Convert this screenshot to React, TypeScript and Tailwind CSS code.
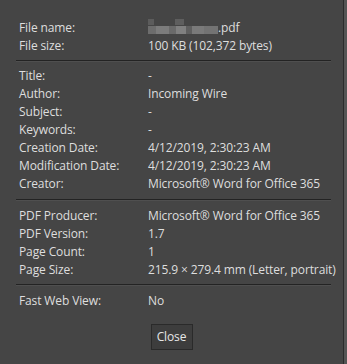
import React from "react";

type Row = [string, React.ReactNode];

const groups: Row[][] = [
  [
    ["File name:", null],
    ["File size:", "100 KB (102,372 bytes)"],
  ],
  [
    ["Title:", "-"],
    ["Author:", "Incoming Wire"],
    ["Subject:", "-"],
    ["Keywords:", "-"],
    ["Creation Date:", "4/12/2019, 2:30:23 AM"],
    ["Modification Date:", "4/12/2019, 2:30:23 AM"],
    ["Creator:", "Microsoft® Word for Office 365"],
  ],
  [
    ["PDF Producer:", "Microsoft® Word for Office 365"],
    ["PDF Version:", "1.7"],
    ["Page Count:", "1"],
    ["Page Size:", "215.9 × 279.4 mm (Letter, portrait)"],
  ],
  [["Fast Web View:", "No"]],
];

const sepPad = ["", "py-[5px]", "py-[6px]", "pt-[5px] pb-[6px]"];

function BlurredName() {
  // pixelated / blurred file name
  return (
    <span className="flex items-center">
      <span className="relative flex h-[12px] items-end">
        <span className="absolute left-[0px] top-[-3px] h-[6px] w-[6px] bg-[#5c5c5c]" />
        <span className="absolute left-[27px] top-[-3px] h-[6px] w-[9px] bg-[#5e5e5e]" />
        <span className="h-[8px] w-[8px] bg-[#6d6d6d]" />
        <span className="h-[8px] w-[13px] bg-[#7c7c7c]" />
        <span className="h-[8px] w-[7px] bg-[#6a6a6a]" />
        <span className="h-[8px] w-[10px] bg-[#808080]" />
        <span className="h-[8px] w-[6px] bg-[#5f5f5f]" />
        <span className="h-[8px] w-[12px] bg-[#7a7a7a]" />
        <span className="h-[8px] w-[14px] bg-[#737373]" />
      </span>
      <span>.pdf</span>
    </span>
  );
}

function Separator() {
  return (
    <div className="ml-[16px] mr-[12px] flex flex-col">
      <div className="h-px bg-[#232323]" />
      <div className="h-px bg-[#4f4f4f]" />
    </div>
  );
}

export default function App() {
  return (
    <div className="flex h-[364px] w-[347px] bg-[#454545]">
      <div
        className="flex w-[343px] flex-col pt-[19px] text-[12px] tracking-[-0.12px] text-[#dedede]"
        style={{ fontFamily: '"Open Sans", "Noto Sans", sans-serif' }}
      >
        {groups.map((group, gi) => (
          <React.Fragment key={gi}>
            {gi > 0 && (
              <div className={sepPad[gi]}>
                <Separator />
              </div>
            )}
            <div className="flex flex-col">
              {group.map(([label, value]) => (
                <div key={label} className="flex h-[18px] items-center pl-[19px]">
                  <span className="w-[129px] shrink-0">{label}</span>
                  {value === null ? <BlurredName /> : <span>{value}</span>}
                </div>
              ))}
            </div>
          </React.Fragment>
        ))}
        <div className="mt-[14px] flex justify-center">
          <button className="flex h-[26px] w-[42px] items-center justify-center border border-[#2a2a2a] bg-[#3d3d3d] text-[12px] text-[#e6e6e6]">
            Close
          </button>
        </div>
      </div>
      <div className="w-px bg-[#2c2c2c]" />
      <div className="flex-1 bg-[#555555]" />
    </div>
  );
}
